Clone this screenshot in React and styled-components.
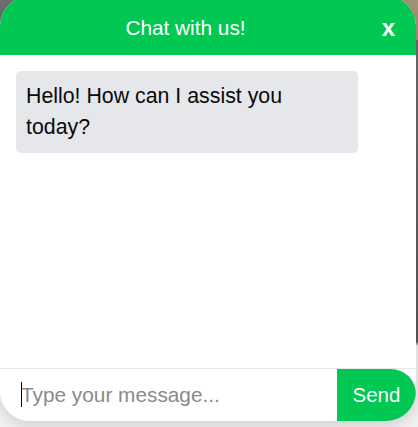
import styled, { createGlobalStyle } from 'styled-components';

const GlobalStyle = createGlobalStyle`
  * {
    box-sizing: border-box;
  }

  body {
    margin: 0;
    height: 427px;
    overflow: hidden;
    font-family: 'Liberation Sans', Arial, sans-serif;
    background:
      linear-gradient(90deg, rgba(0, 0, 0, 0) 70%, rgba(170, 150, 120, 0.9) 92%) top / 100% 40px no-repeat,
      linear-gradient(180deg, #6f6f6f 0, #575757 80%, #f1f1f1 81%);
  }
`;

export default function App() {
  return (
    <>
      <GlobalStyle />
      <ChatBox>
        <Header>
          <Title>Chat with us!</Title>
          <CloseBtn>x</CloseBtn>
        </Header>

        <Messages>
          <Bubble>Hello! How can I assist you today?</Bubble>
        </Messages>

        <InputRow>
          <Cursor />
          <Input placeholder="Type your message..." />
          <SendBtn>Send</SendBtn>
        </InputRow>
      </ChatBox>
    </>
  );
}

const ChatBox = styled.div`
  display: flex;
  flex-direction: column;
  width: 416px;
  height: 425px;
  margin-top: -4px;
  background: #fff;
  border-radius: 30px;
  overflow: hidden;
  box-shadow: 0 4px 14px rgba(0, 0, 0, 0.15);
`;

const Header = styled.header`
  display: flex;
  align-items: center;
  height: 59px;
  padding: 4px 15px 0 15px;
  background: #00c853;
  color: #fff;
`;

const Title = styled.h3`
  flex: 1;
  margin: 0;
  text-align: center;
  font-size: 20.8px;
  font-weight: 400;
`;

const CloseBtn = styled.button`
  width: 45px;
  padding: 0 0 0 20px;
  border: none;
  background: none;
  color: #fff;
  font-family: 'Liberation Sans', Arial, sans-serif;
  font-size: 24px;
  font-weight: 700;
  text-align: center;
  cursor: pointer;
`;

const Messages = styled.div`
  flex: 1;
  padding: 16px 16px;
`;

const Bubble = styled.div`
  max-width: 342px;
  padding: 10px 10px;
  background: #e5e7eb;
  border-radius: 5px;
  color: #0a0a0a;
  font-size: 21.33px;
  line-height: 31px;
`;

const InputRow = styled.form`
  display: flex;
  align-items: stretch;
  height: 53px;
  border-top: 1px solid #e5e5e5;
  position: relative;
`;

const Cursor = styled.span`
  position: absolute;
  left: 21px;
  top: 13px;
  width: 1px;
  height: 25px;
  background: #000;
`;

const Input = styled.input`
  flex: 1;
  min-width: 0;
  padding: 0 0 0 21px;
  border: none;
  outline: none;
  font-family: 'Liberation Sans', Arial, sans-serif;
  font-size: 20.8px;

  &::placeholder {
    color: #8a8a8a;
  }
`;

const SendBtn = styled.button`
  width: 79px;
  border: none;
  border-radius: 0 25px 25px 0;
  background: #00c853;
  color: #fff;
  font-family: 'Liberation Sans', Arial, sans-serif;
  font-size: 20.5px;
  cursor: pointer;
`;
